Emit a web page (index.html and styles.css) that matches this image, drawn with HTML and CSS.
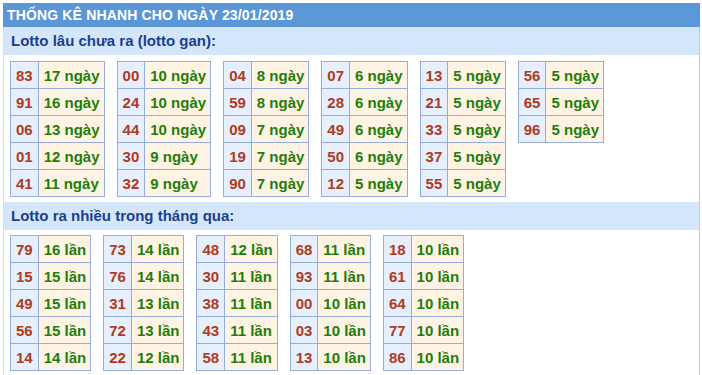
FILE: index.html
```html
<!DOCTYPE html>
<html lang="vi">
<head>
<meta charset="utf-8">
<link rel="stylesheet" href="styles.css">
</head>
<body>
<div class="box">
  <div class="title">THỐNG KÊ NHANH CHO NGÀY 23/01/2019</div>
  <div class="sub">Lotto lâu chưa ra (lotto gan):</div>
  <div class="tables">
    <table><tr><td class="n">83</td><td class="v">17 ngày</td></tr><tr><td class="n">91</td><td class="v">16 ngày</td></tr><tr><td class="n">06</td><td class="v">13 ngày</td></tr><tr><td class="n">01</td><td class="v">12 ngày</td></tr><tr><td class="n">41</td><td class="v">11 ngày</td></tr></table>
    <table><tr><td class="n">00</td><td class="v">10 ngày</td></tr><tr><td class="n">24</td><td class="v">10 ngày</td></tr><tr><td class="n">44</td><td class="v">10 ngày</td></tr><tr><td class="n">30</td><td class="v">9 ngày</td></tr><tr><td class="n">32</td><td class="v">9 ngày</td></tr></table>
    <table><tr><td class="n">04</td><td class="v">8 ngày</td></tr><tr><td class="n">59</td><td class="v">8 ngày</td></tr><tr><td class="n">09</td><td class="v">7 ngày</td></tr><tr><td class="n">19</td><td class="v">7 ngày</td></tr><tr><td class="n">90</td><td class="v">7 ngày</td></tr></table>
    <table><tr><td class="n">07</td><td class="v">6 ngày</td></tr><tr><td class="n">28</td><td class="v">6 ngày</td></tr><tr><td class="n">49</td><td class="v">6 ngày</td></tr><tr><td class="n">50</td><td class="v">6 ngày</td></tr><tr><td class="n">12</td><td class="v">5 ngày</td></tr></table>
    <table><tr><td class="n">13</td><td class="v">5 ngày</td></tr><tr><td class="n">21</td><td class="v">5 ngày</td></tr><tr><td class="n">33</td><td class="v">5 ngày</td></tr><tr><td class="n">37</td><td class="v">5 ngày</td></tr><tr><td class="n">55</td><td class="v">5 ngày</td></tr></table>
    <table><tr><td class="n">56</td><td class="v">5 ngày</td></tr><tr><td class="n">65</td><td class="v">5 ngày</td></tr><tr><td class="n">96</td><td class="v">5 ngày</td></tr></table>
  </div>
  <div class="sub">Lotto ra nhiều trong tháng qua:</div>
  <div class="tables tight">
    <table><tr><td class="n">79</td><td class="v">16 lần</td></tr><tr><td class="n">15</td><td class="v">15 lần</td></tr><tr><td class="n">49</td><td class="v">15 lần</td></tr><tr><td class="n">56</td><td class="v">15 lần</td></tr><tr><td class="n">14</td><td class="v">14 lần</td></tr></table>
    <table><tr><td class="n">73</td><td class="v">14 lần</td></tr><tr><td class="n">76</td><td class="v">14 lần</td></tr><tr><td class="n">31</td><td class="v">13 lần</td></tr><tr><td class="n">72</td><td class="v">13 lần</td></tr><tr><td class="n">22</td><td class="v">12 lần</td></tr></table>
    <table><tr><td class="n">48</td><td class="v">12 lần</td></tr><tr><td class="n">30</td><td class="v">11 lần</td></tr><tr><td class="n">38</td><td class="v">11 lần</td></tr><tr><td class="n">43</td><td class="v">11 lần</td></tr><tr><td class="n">58</td><td class="v">11 lần</td></tr></table>
    <table><tr><td class="n">68</td><td class="v">11 lần</td></tr><tr><td class="n">93</td><td class="v">11 lần</td></tr><tr><td class="n">00</td><td class="v">10 lần</td></tr><tr><td class="n">03</td><td class="v">10 lần</td></tr><tr><td class="n">13</td><td class="v">10 lần</td></tr></table>
    <table><tr><td class="n">18</td><td class="v">10 lần</td></tr><tr><td class="n">61</td><td class="v">10 lần</td></tr><tr><td class="n">64</td><td class="v">10 lần</td></tr><tr><td class="n">77</td><td class="v">10 lần</td></tr><tr><td class="n">86</td><td class="v">10 lần</td></tr></table>
  </div>
</div>
</body>
</html>
```
FILE: styles.css
```css
html, body {
  margin: 0;
  padding: 0;
  background: #ffffff;
}
body {
  padding: 3px 2px 0 3px;
  font-family: "Liberation Sans", Arial, sans-serif;
}
.box {
  height: 372px;
  border-left: 1px solid #dcdcdc;
  border-right: 1px solid #c8c8c8;
  box-sizing: border-box;
  width: 697px;
}
.title {
  height: 24px;
  line-height: 24px;
  background: #5b96d6;
  color: #ffffff;
  font-weight: bold;
  font-size: 14px;
  letter-spacing: 0.15px;
  padding-left: 4px;
  margin-left: -1px;
  margin-right: -1px;
}
.sub {
  height: 28px;
  line-height: 28px;
  background: #d4e6fa;
  color: #1b3f8f;
  font-weight: bold;
  font-size: 15px;
  padding-left: 7px;
}
.tables {
  display: flex;
  align-items: flex-start;
  gap: 12px;
  padding: 6px 0 5px 6px;
}
.tables.tight {
  padding-top: 5px;
}
table {
  border-collapse: collapse;
  font-size: 15px;
  font-weight: bold;
}
td {
  height: 27px;
  padding: 0 5px;
  border: 1px solid #94ace0;
  white-space: nowrap;
  box-sizing: border-box;
}
td.n {
  background: #e5effd;
  color: #b03b1c;
  text-align: center;
}
td.v {
  background: #fff4e3;
  color: #1f7d0c;
  padding: 0 4px 0 5px;
}
```
